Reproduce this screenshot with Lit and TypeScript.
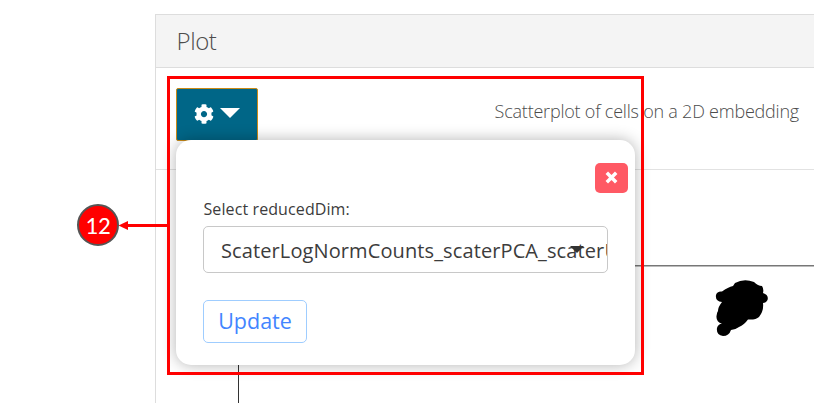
import { LitElement, html, css } from "lit";
import { customElement } from "lit/decorators.js";

@customElement("plot-dropdown")
class PlotDropdown extends LitElement {
  static styles = css`
    :host { display: block; box-sizing: border-box; width: 459px; height: 225px; background: #fff; border-radius: 15px; box-shadow: 0 0 15px rgba(0, 0, 0, 0.3); padding: 23px 7px 0 27px; font-family: "Open Sans", sans-serif; color: #3c3c3c; }
    .top { display: flex; justify-content: flex-end; }
    .close { box-sizing: border-box; width: 33px; height: 30px; padding: 0; border: 0; border-radius: 5px; background: #ff5964; display: flex; align-items: center; justify-content: center; }
    .close svg { margin-top: -2px; }
    .label { font-size: 16px; line-height: 22px; margin-top: 5px; margin-left: 0.5px; letter-spacing: 0.1px; white-space: nowrap; }
    .select { position: relative; box-sizing: border-box; width: 405px; height: 47px; margin-top: 6px; border: 1px solid #c8c8c8; border-radius: 5px; overflow: hidden; white-space: nowrap; font-size: 20px; letter-spacing: 0.11px; line-height: 47px; padding-left: 17px; }
    .caret { position: absolute; right: 23px; top: 19px; display: block; }
    .update { display: block; box-sizing: border-box; width: 104px; height: 43px; margin-top: 27px; padding: 0 0 2px; border: 1px solid #9fcdff; border-radius: 5px; background: #fff; color: #4285ff; font: 21.5px/38px "Open Sans", sans-serif; }
  `;
  render() {
    return html`
      <div class="top">
        <button class="close" aria-label="Close">
          <svg width="13" height="13" viewBox="0 0 13 13"><path d="M1.8 1.8L11.2 11.2M11.2 1.8L1.8 11.2" stroke="#fff" stroke-width="3.5" /></svg>
        </button>
      </div>
      <div class="label">Select reducedDim:</div>
      <div class="select">ScaterLogNormCounts_scaterPCA_scaterUMAP
        <svg class="caret" width="14" height="7" viewBox="0 0 14 7"><path d="M0 0H14L7 7Z" fill="#333" /></svg>
      </div>
      <button class="update">Update</button>
    `;
  }
}

@customElement("app-root")
class AppRoot extends LitElement {
  static styles = css`
    :host { display: block; position: relative; width: 814px; height: 403px; overflow: hidden; background: #fff; font-family: "Open Sans", sans-serif; }
    .page { padding: 14px 0 0 155px; }
    .card { box-sizing: border-box; height: 420px; border: 1px solid #ddd; border-right: 0; }
    .header { box-sizing: border-box; height: 53px; background: #f4f4f4; border-bottom: 1px solid #ddd; padding-left: 20.5px; font-size: 24px; letter-spacing: -0.4px; font-weight: 300; line-height: 52px; color: #4c4c4c; }
    .toolbar { box-sizing: border-box; height: 102px; padding: 20px 15px 0 20px; display: flex; justify-content: space-between; border-bottom: 1px solid #e2e2e2; }
    .gear { box-sizing: border-box; width: 82px; height: 53px; padding: 0 0 2px; border: 1px solid #c98a17; border-radius: 2px; background: #006687; display: flex; align-items: center; justify-content: center; gap: 6px; }
    .title { font-size: 18px; letter-spacing: -0.22px; font-weight: 300; line-height: 46px; color: #4c4c4c; white-space: nowrap; }
    .plot { display: block; }
    .dropdown { position: absolute; left: 176px; top: 140px; }
    .marker { position: absolute; left: 0; top: 0; }
    .num { font: 25px Carlito, Lato, "Open Sans", sans-serif; fill: #fff; }
  `;
  render() {
    return html`
      <div class="page">
        <div class="card">
          <div class="header">Plot</div>
          <div class="toolbar">
            <button class="gear" aria-label="Plot settings">
              <svg width="20" height="20" viewBox="0 0 512 512"><path fill="#fff" d="M487.400 315.700l-42.600-24.600c4.300-23.200 4.300-47 0-70.200l42.600-24.600c4.900-2.800 7.100-8.600 5.500-14-11.100-35.600-30-67.800-54.700-94.600-3.800-4.100-10-5.100-14.800-2.300L380.800 110c-17.900-15.400-38.500-27.300-60.800-35.100V25.800c0-5.600-3.900-10.500-9.400-11.700-36.700-8.200-74.300-7.800-109.200 0-5.500 1.200-9.400 6.100-9.400 11.700V75c-22.200 7.900-42.800 19.800-60.800 35.100L88.700 85.500c-4.900-2.800-11-1.900-14.800 2.300-24.700 26.700-43.600 58.900-54.700 94.600-1.700 5.400.6 11.200 5.500 14L67.300 221c-4.300 23.200-4.300 47 0 70.200l-42.600 24.600c-4.900 2.800-7.100 8.600-5.500 14 11.100 35.600 30 67.800 54.700 94.600 3.800 4.100 10 5.100 14.800 2.300l42.600-24.600c17.900 15.400 38.500 27.300 60.800 35.100v49.200c0 5.600 3.900 10.500 9.400 11.700 36.700 8.200 74.300 7.800 109.200 0 5.500-1.200 9.400-6.100 9.400-11.700v-49.200c22.200-7.900 42.800-19.800 60.800-35.100l42.600 24.600c4.900 2.800 11 1.900 14.800-2.300 24.700-26.700 43.600-58.900 54.700-94.600 1.500-5.500-.7-11.300-5.600-14.100zM256 336c-44.100 0-80-35.900-80-80s35.900-80 80-80 80 35.900 80 80-35.900 80-80 80z" /></svg>
              <svg width="20" height="13" viewBox="0 0 20 13"><path fill="#fff" d="M0 1H20L10 11Z" /></svg>
            </button>
            <div class="title">Scatterplot of cells on a 2D embedding</div>
          </div>
          <svg class="plot" width="658" height="233" viewBox="156 170 658 233">
            <path d="M238.500 403V265.500" fill="none" stroke="#333" />
            <path d="M238 265.500H814" stroke="#777" />
            <path d="M238 266.500H814" stroke="#bbb" />
            <path d="M735 283Q744 278 754 282Q758 286 762 286Q764 289 763 293Q769 295 767.500 300Q766 303 763 303Q764 311 759 317Q756 320 748 319.500Q744 325 739 327Q735 330 731 330Q729 336 723 336Q716 335 717 328Q718 324 722 323.500Q716 322 716.500 316Q717 312 718 311Q718 307 722 302Q715 301 716 295Q717 291 722 291.500Q728 287 733 286Z" />
          </svg>
        </div>
      </div>
      <plot-dropdown class="dropdown"></plot-dropdown>
      <svg class="marker" width="814" height="403" viewBox="0 0 814 403">
        <rect x="168.500" y="77.500" width="474" height="296" fill="none" stroke="#f00" stroke-width="3" />
        <path d="M168 225.500H126" stroke="#f00" stroke-width="3" />
        <path d="M118.500 225.500L128 221V230Z" fill="#f00" />
        <circle cx="98" cy="225" r="20" fill="#f00" stroke="#555" stroke-width="2" />
        <text class="num" x="98" y="234" text-anchor="middle">12</text>
      </svg>
    `;
  }
}
